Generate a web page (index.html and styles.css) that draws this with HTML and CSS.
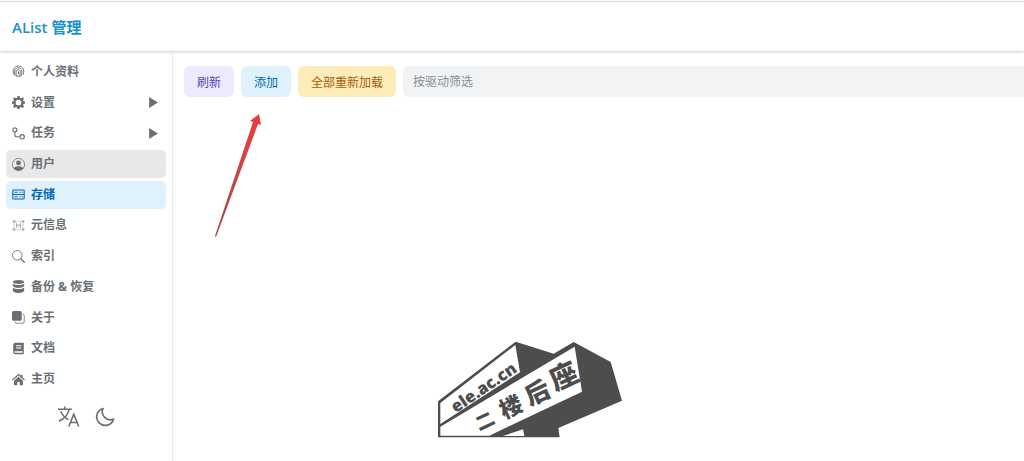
FILE: index.html
```html
<!DOCTYPE html>
<html lang="zh-CN">
<head>
  <meta charset="UTF-8">
  <meta name="viewport" content="width=device-width, initial-scale=1.0">
  <title>AList 管理</title>
  <link rel="stylesheet" href="styles.css">
</head>
<body>
  <header class="header">
    <a class="brand" href="#">AList 管理</a>
  </header>

  <div class="layout">
    <aside class="sidebar">
      <nav class="menu">
        <a class="menu-item" href="#">
          <svg class="icon" viewBox="0 0 16 16" fill="none" stroke="currentColor" stroke-width="1.200">
            <path d="M2.500 12C1 9 1.200 5.500 3 3.500 5.500.500 10.500.500 13 3.500c1.800 2 2 5.500.500 8.500M4 13.500C2.500 9 3 5.500 5.500 4 8 2.500 11.500 4 12 7c.300 2.500 0 5-1.500 7.500M6 14.500C4.500 10.500 4.700 7.500 6.200 6.300 8 5 10.200 6.200 10.200 8.500c0 2.500-.700 4.800-1.700 6.500M8 8v3.500M7.300 15v-2"/>
          </svg>
          <span>个人资料</span>
        </a>
        <a class="menu-item" href="#">
          <svg class="icon" viewBox="0 0 16 16" fill="currentColor" fill-rule="evenodd">
            <path d="M6.700 0h2.600l.500 2.200 1.200.500 2-1.200 1.800 1.800-1.200 2 .500 1.200 1.900.300v2.500l-1.900.500-.500 1.200 1.200 2-1.800 1.800-2-1.200-1.200.500-.500 1.900H6.700l-.500-1.900-1.200-.500-2 1.200L1.200 13l1.200-2-.500-1.200L0 9.300V6.800l1.900-.300.500-1.200-1.200-2L3 1.500l2 1.200 1.200-.500zM8 4.500a3.500 3.500 0 1 0 0 7 3.500 3.500 0 0 0 0-7z"/>
          </svg>
          <span>设置</span>
          <svg class="caret" viewBox="0 0 8 10" fill="currentColor"><path d="M0 0l8 5-8 5z"/></svg>
        </a>
        <a class="menu-item" href="#">
          <svg class="icon" viewBox="0 0 16 16" fill="none" stroke="currentColor" stroke-width="1.400">
            <circle cx="3.500" cy="3.500" r="2.500"/>
            <circle cx="12.500" cy="12" r="2.700"/>
            <path d="M3.500 6v3.500A2.500 2.500 0 0 0 6 12h3.800"/>
          </svg>
          <span>任务</span>
          <svg class="caret" viewBox="0 0 8 10" fill="currentColor"><path d="M0 0l8 5-8 5z"/></svg>
        </a>
        <a class="menu-item hovered" href="#">
          <svg class="icon" viewBox="0 0 16 16" fill="currentColor" fill-rule="evenodd">
            <path d="M11 6a3 3 0 1 1-6 0 3 3 0 0 1 6 0z"/>
            <path d="M0 8a8 8 0 1 1 16 0A8 8 0 0 1 0 8zm8-7a7 7 0 0 0-5.468 11.370C3.242 11.226 4.805 10 8 10s4.757 1.225 5.468 2.370A7 7 0 0 0 8 1z"/>
          </svg>
          <span>用户</span>
        </a>
        <a class="menu-item active" href="#" aria-current="page">
          <svg class="icon" viewBox="0 0 16 16" fill="none" stroke="currentColor" stroke-width="1.300">
            <rect x="1" y="2.500" width="14" height="11" rx="1"/>
            <path d="M1 8h14M3 5.300h4M3 10.700h4M9 5.300h1.500M12 5.300h1.500M9 10.700h1.500M12 10.700h1.500"/>
          </svg>
          <span>存储</span>
        </a>
        <a class="menu-item" href="#">
          <svg class="icon icon-light" viewBox="0 0 16 16" fill="none" stroke="currentColor" stroke-width="1">
            <path d="M2.500 4v8M13.500 4v8M4 3h8M4 13h8" stroke-dasharray="1 1"/>
            <path d="M1.500 2h2v2h-2zM12.500 2h2v2h-2zM1.500 12h2v2h-2zM12.500 12h2v2h-2zM5.500 11V5.500L8 9l2.500-3.500V11"/>
          </svg>
          <span>元信息</span>
        </a>
        <a class="menu-item" href="#">
          <svg class="icon" viewBox="0 0 16 16" fill="none" stroke="currentColor" stroke-width="1.100">
            <circle cx="6.500" cy="6.500" r="5.900"/>
            <path d="M10.800 10.800l4.500 4.500" stroke-width="1.600" stroke-linecap="round"/>
          </svg>
          <span>索引</span>
        </a>
        <a class="menu-item" href="#">
          <svg class="icon" viewBox="0 0 16 16" fill="currentColor">
            <path d="M8 0c4 0 7 1.100 7 2.500S12 5 8 5 1 3.900 1 2.500 4 0 8 0z"/>
            <path d="M1 4.600C2.500 5.700 5 6.200 8 6.200s5.500-.500 7-1.600v2.600C15 8.700 12 9.800 8 9.800S1 8.700 1 7.200z"/>
            <path d="M1 9.500C2.500 10.600 5 11.100 8 11.100s5.500-.500 7-1.600v3.800c0 1.500-3 2.700-7 2.700s-7-1.200-7-2.700z"/>
          </svg>
          <span>备份 &amp; 恢复</span>
        </a>
        <a class="menu-item" href="#">
          <svg class="icon" viewBox="0 0 16 16" fill="currentColor">
            <rect x="0" y="0" width="12" height="12" rx="2"/>
            <path d="M13 4h.500A1.500 1.500 0 0 1 15 5.500v8a1.500 1.500 0 0 1-1.500 1.500h-8A1.500 1.500 0 0 1 4 13.500V13" fill="none" stroke="currentColor"/>
          </svg>
          <span>关于</span>
        </a>
        <a class="menu-item" href="#">
          <svg class="icon" viewBox="0 0 16 16" fill="currentColor" fill-rule="evenodd">
            <path d="M4 1h10.500v14H4a2.500 2.500 0 0 1-2.500-2.500v-9A2.500 2.500 0 0 1 4 1zm1 3v1.300h6.500V4zm0 2.700V8h6.500V6.700zM4 11.300a1 1 0 0 0 0 2h9v-2z"/>
          </svg>
          <span>文档</span>
        </a>
        <a class="menu-item" href="#">
          <svg class="icon" viewBox="0 0 16 16" fill="currentColor">
            <path d="M8 1l2.700 2.400V2H13v3.500l3 2.700-1 1.100L8 3.100 1 9.300 0 8.200z"/>
            <path d="M8 4.600l5.500 4.900V15h-4v-4h-3v4h-4V9.500z"/>
          </svg>
          <span>主页</span>
        </a>
      </nav>

      <div class="tools">
        <button class="tool" type="button" aria-label="语言">
          <svg viewBox="0 0 24 24" fill="none" stroke="currentColor" stroke-width="1.600">
            <path d="M1 4.500h14.500M8.200 1.500v3M12.800 4.500C11.500 10 7 14.500 2 17M4 6.500C5.500 10.500 8.500 13.500 12 15.200M12.300 22.500l5.200-13 5.200 13M14 18.200h7"/>
          </svg>
        </button>
        <button class="tool" type="button" aria-label="深色模式">
          <svg class="moon" viewBox="0 0 20 20" fill="none" stroke="currentColor" stroke-width="1.700" stroke-linejoin="round">
            <path d="M8 1.500A8.600 8.600 0 1 0 18.600 12 8 8 0 0 1 8 1.500z"/>
          </svg>
        </button>
      </div>
    </aside>

    <main class="content">
      <div class="toolbar">
        <button class="btn btn-accent" type="button">刷新</button>
        <button class="btn btn-info" type="button">添加</button>
        <button class="btn btn-warning" type="button">全部重新加载</button>
        <input class="filter" type="text" placeholder="按驱动筛选" aria-label="按驱动筛选">
      </div>
    </main>
  </div>

  <!-- pointer to the add button -->
  <svg class="arrow" viewBox="0 0 50 127" aria-hidden="true">
    <defs>
      <linearGradient id="arrow-fill" x1="0" y1="1" x2="0" y2="0">
        <stop offset="0" stop-color="#a04848"/>
        <stop offset="0.600" stop-color="#d24444"/>
        <stop offset="1" stop-color="#e83c3c"/>
      </linearGradient>
    </defs>
    <path fill="url(#arrow-fill)" d="M47 2l2 11-3-1L4 125 3 124 41 10l-3-1z"/>
  </svg>

  <!-- site watermark -->
  <svg class="watermark" viewBox="0 0 630 360">
    <path fill="#4d4d4d" d="M39 214L272 35l114 36 60-35 111 60 34 116-191 82 4 28H39z"/>
    <path fill="#fff" d="M46 219L271 45l14 82L46 282z"/>
    <path fill="#fff" d="M46 290L449 50l22 135-278 132H46zM234 318l60-20 4 20z"/>
    <g fill="#4d4d4d">
      <text class="mark-latin" transform="translate(92 250) rotate(-34)">ele.ac.cn</text>
      <text class="mark-cjk mark-s" transform="translate(163 303) rotate(-25)">二</text>
      <text class="mark-cjk mark-m" transform="translate(237 268) rotate(-25)">楼</text>
      <text class="mark-cjk mark-l" transform="translate(314 228) rotate(-25)">后</text>
      <text class="mark-cjk mark-xl" transform="translate(391 184) rotate(-25)">座</text>
    </g>
  </svg>
</body>
</html>
```

FILE: styles.css
```css
* {
  box-sizing: border-box;
}

body {
  margin: 0;
  min-height: 100vh;
  display: flex;
  flex-direction: column;
  position: relative;
  overflow-x: hidden;
  background: #fff;
  color: #687076;
  font-family: "Open Sans", "Noto Sans CJK SC", sans-serif;
  font-size: 12px;
}

a {
  color: inherit;
  text-decoration: none;
}

button,
input {
  font-family: inherit;
  font-size: 12px;
}

/* Header */
.header {
  display: flex;
  align-items: center;
  height: 50px;
  margin-top: 1px;
  padding: 0 12px;
  border-top: 1px solid #dcdcdc;
  box-shadow: 0 1px 3px rgba(0, 0, 0, 0.2);
}

.brand {
  color: #1890d0;
  font-size: 15px;
  font-weight: 600;
}

.layout {
  flex: 1;
  display: flex;
}

/* Sidebar */
.sidebar {
  width: 173px;
  flex-shrink: 0;
  padding: 7px 6px;
  border-right: 1px solid #ebebeb;
}

.menu {
  display: grid;
  grid-auto-rows: 1fr;
  gap: 3px;
  min-height: 335px;
}

.menu-item {
  display: flex;
  align-items: center;
  gap: 6px;
  padding: 0 8px 0 6px;
  border-radius: 5px;
  font-weight: 700;
  line-height: 20px;
}

.menu-item.hovered {
  background: #e8e8e8;
}

.menu-item.active {
  background: #e0f1fe;
  color: #0068b8;
}

.icon {
  width: 13px;
  height: 13px;
}

.icon-light {
  opacity: 0.7;
}

.caret {
  width: 9px;
  height: 11px;
  margin-left: auto;
}

.tools {
  display: flex;
  justify-content: center;
  gap: 15px;
  margin-top: 12px;
}

.tool {
  display: flex;
  align-items: center;
  padding: 0;
  border: none;
  background: none;
  color: #687076;
  cursor: pointer;
}

.tool svg {
  width: 23px;
  height: 23px;
}

.tool .moon {
  width: 20px;
  height: 20px;
}

/* Content */
.content {
  flex: 1;
  padding: 15px 0 15px 11px;
}

.toolbar {
  display: flex;
  gap: 7px;
}

.btn {
  height: 31px;
  padding: 0 13px;
  border: none;
  border-radius: 6px;
  cursor: pointer;
}

.btn-accent {
  background: #ede9fe;
  color: #5746af;
}

.btn-info {
  background: #e0f1fe;
  color: #0069a8;
}

.btn-warning {
  background: #fdebb8;
  color: #a35c10;
}

.filter {
  flex: 1;
  min-width: 0;
  height: 31px;
  padding: 0 10px;
  border: none;
  border-radius: 6px 0 0 6px;
  outline: none;
  background: #f1f3f5;
}

.filter::placeholder {
  color: #889096;
}

/* Overlays */
.arrow {
  position: absolute;
  left: 212px;
  top: 112px;
  width: 50px;
  height: 127px;
  pointer-events: none;
}

.watermark {
  position: absolute;
  left: 425px;
  top: 330px;
  width: 210px;
  height: 120px;
  pointer-events: none;
}

.mark-latin {
  font-size: 50px;
  font-weight: 800;
}

.mark-cjk {
  font-family: "Noto Sans CJK SC", sans-serif;
  font-weight: 900;
}

.mark-s {
  font-size: 56px;
}

.mark-m {
  font-size: 68px;
}

.mark-l {
  font-size: 74px;
}

.mark-xl {
  font-size: 84px;
}
```
